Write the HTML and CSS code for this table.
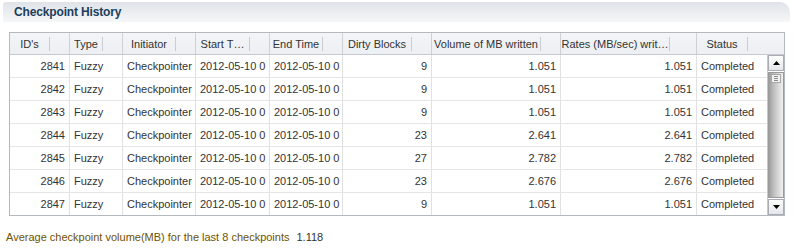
FILE: index.html
```html
<!DOCTYPE html>
<html>
<head>
<meta charset="utf-8">
<link rel="stylesheet" href="styles.css">
</head>
<body>
<div class="panel">
  <div class="titlebar"><span class="title">Checkpoint History</span></div>
  <div class="table">
    <div class="thead">
      <div class="th"><span class="lbl">ID's</span><span class="handle"></span></div>
      <div class="th"><span class="lbl">Type</span><span class="handle"></span></div>
      <div class="th"><span class="lbl">Initiator</span><span class="handle"></span></div>
      <div class="th"><span class="lbl">Start T…</span><span class="handle"></span></div>
      <div class="th"><span class="lbl">End Time</span><span class="handle"></span></div>
      <div class="th"><span class="lbl">Dirty Blocks</span><span class="handle"></span></div>
      <div class="th"><span class="lbl">Volume of MB written</span><span class="handle"></span></div>
      <div class="th th-rates"><span class="lbl">Rates (MB/sec) writ…</span><span class="handle"></span></div>
      <div class="th th-status"><span class="lbl">Status</span><span class="handle"></span></div>
    </div>
    <div class="tbody">
      <div class="rows">
        <div class="tr"><div class="td num">2841</div><div class="td">Fuzzy</div><div class="td">Checkpointer</div><div class="td">2012-05-10 0</div><div class="td">2012-05-10 0</div><div class="td num">9</div><div class="td num">1.051</div><div class="td num">1.051</div><div class="td">Completed</div></div>
        <div class="tr"><div class="td num">2842</div><div class="td">Fuzzy</div><div class="td">Checkpointer</div><div class="td">2012-05-10 0</div><div class="td">2012-05-10 0</div><div class="td num">9</div><div class="td num">1.051</div><div class="td num">1.051</div><div class="td">Completed</div></div>
        <div class="tr"><div class="td num">2843</div><div class="td">Fuzzy</div><div class="td">Checkpointer</div><div class="td">2012-05-10 0</div><div class="td">2012-05-10 0</div><div class="td num">9</div><div class="td num">1.051</div><div class="td num">1.051</div><div class="td">Completed</div></div>
        <div class="tr"><div class="td num">2844</div><div class="td">Fuzzy</div><div class="td">Checkpointer</div><div class="td">2012-05-10 0</div><div class="td">2012-05-10 0</div><div class="td num">23</div><div class="td num">2.641</div><div class="td num">2.641</div><div class="td">Completed</div></div>
        <div class="tr"><div class="td num">2845</div><div class="td">Fuzzy</div><div class="td">Checkpointer</div><div class="td">2012-05-10 0</div><div class="td">2012-05-10 0</div><div class="td num">27</div><div class="td num">2.782</div><div class="td num">2.782</div><div class="td">Completed</div></div>
        <div class="tr"><div class="td num">2846</div><div class="td">Fuzzy</div><div class="td">Checkpointer</div><div class="td">2012-05-10 0</div><div class="td">2012-05-10 0</div><div class="td num">23</div><div class="td num">2.676</div><div class="td num">2.676</div><div class="td">Completed</div></div>
        <div class="tr"><div class="td num">2847</div><div class="td">Fuzzy</div><div class="td">Checkpointer</div><div class="td">2012-05-10 0</div><div class="td">2012-05-10 0</div><div class="td num">9</div><div class="td num">1.051</div><div class="td num">1.051</div><div class="td">Completed</div></div>
      </div>
      <div class="scrollbar">
        <div class="sbtn"><svg width="7" height="4" viewBox="0 0 7 4"><polygon points="3.5,0 7,4 0,4" fill="#000"/></svg></div>
        <div class="thumb"><div class="grip"><i></i><i></i><i></i></div></div>
        <div class="sbtn"><svg width="7" height="4" viewBox="0 0 7 4"><polygon points="0,0 7,0 3.5,4" fill="#000"/></svg></div>
      </div>
    </div>
  </div>
  <div class="footer"><span class="flabel">Average checkpoint volume(MB) for the last 8 checkpoints</span><span class="fval">1.118</span></div>
</div>
</body>
</html>
```

FILE: styles.css
```css
* { box-sizing: border-box; }
body {
  margin: 0;
  background: #fff;
  font-family: "Liberation Sans", Arial, sans-serif;
  font-size: 11px;
  color: #333;
}
.panel { padding-top: 2px; }
.titlebar {
  margin: 0 5px 0 3px;
  height: 20px;
  display: flex;
  align-items: center;
  padding-left: 11px;
  background: linear-gradient(#dfe3e8, #f6f7f8);
  border-radius: 3px 10px 0 0;
}
.title {
  font-weight: bold;
  font-size: 12px;
  letter-spacing: -0.15px;
  color: #1c3d5c;
}
.table {
  margin: 10px 0 0 9px;
  width: 776px;
  border: 1px solid #b4b9bf;
  background: #fff;
}
.thead {
  display: grid;
  grid-template-columns: 60px 53px 73px 74px 73px 89px 129px 136px 87px;
  height: 22px;
  border-bottom: 1px solid #c6cad0;
  background: linear-gradient(#f3f5f8, #eceff3);
}
.th {
  display: flex;
  align-items: center;
  border-right: 1px solid #cdd1d6;
  white-space: nowrap;
  overflow: hidden;
}
.th:last-child { border-right: 0; }
.lbl { flex: 1; text-align: center; overflow: hidden; }
.handle {
  width: 1px;
  height: 14px;
  background: #c9cdd3;
  margin-right: 19px;
  flex: none;
}
.th-rates .handle { margin-right: 26px; }
.th-status .handle { margin-right: 36px; }
.tbody { display: flex; }
.rows { width: 757px; }
.tr {
  display: grid;
  grid-template-columns: 60px 53px 73px 74px 73px 89px 129px 136px 70px;
  height: 23px;
  border-bottom: 1px solid #e6e6e6;
}
.tr:last-child { height: 22px; border-bottom: 0; }
.td {
  display: flex;
  align-items: center;
  padding: 0 4px;
  border-right: 1px solid #e1e1e1;
  white-space: nowrap;
  overflow: hidden;
}
.td:last-child { border-right: 0; }
.td.num { justify-content: flex-end; }
.scrollbar {
  width: 17px;
  display: flex;
  flex-direction: column;
  border-left: 1px solid #c8c8c8;
}
.sbtn {
  height: 16px;
  flex: none;
  display: flex;
  align-items: center;
  justify-content: center;
  background: linear-gradient(#ffffff, #e4e6ea);
  border: 1px solid #a9adb3;
}
.thumb {
  flex: 1;
  margin: 1px 0;
  background: linear-gradient(to right, #9e9e9e, #c4c4c4 40%, #dedede 75%, #efefef);
  border: 1px solid #9a9a9a;
  padding-top: 1px;
}
.grip {
  margin: 0 2px;
  height: 9px;
  background: #f2f2f2;
  border: 1px solid #a8a8a8;
  display: flex;
  flex-direction: column;
  justify-content: center;
  gap: 1px;
  padding: 0 2px;
}
.grip i { display: block; height: 1px; background: #8a8a8a; }
.footer {
  margin: 14px 0 0 6px;
  line-height: 14px;
}
.flabel { color: #6e5200; }
.fval { margin-left: 7px; color: #333; }
```
